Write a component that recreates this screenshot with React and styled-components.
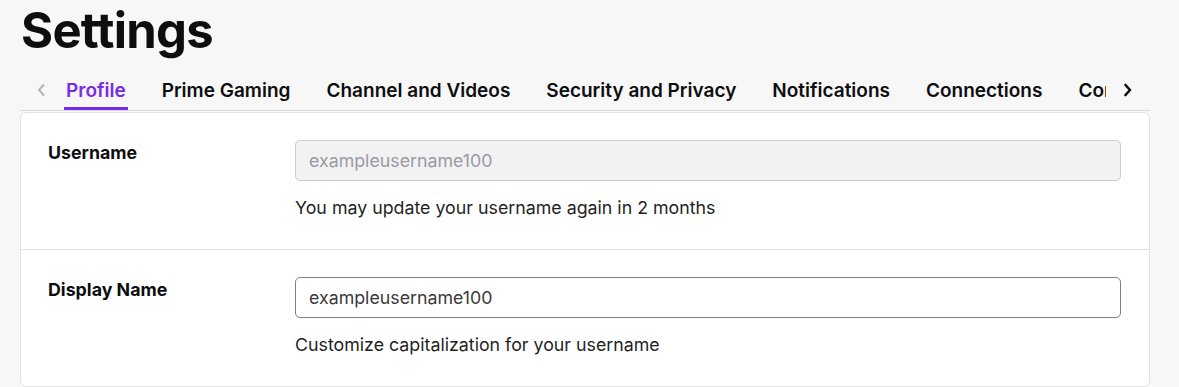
import React from 'react';
import styled, { createGlobalStyle } from 'styled-components';

const GlobalStyle = createGlobalStyle`
  html, body {
    margin: 0;
    background: #f7f7f8;
    font-family: Inter, "Noto Sans", sans-serif;
    color: #0e0e10;
  }
`;

const Page = styled.div`
  padding: 1px 29px 0 20px;
`;

const Title = styled.h1`
  margin: 0 0 9px 1px;
  font-size: 49px;
  line-height: 60px;
  font-weight: 700;
  letter-spacing: -0.7px;
`;

const TabBar = styled.nav`
  display: flex;
  align-items: stretch;
  height: 40px;
  border-bottom: 1px solid #dadade;
  margin-bottom: 1px;
`;

const Arrow = styled.button`
  display: flex;
  align-items: center;
  justify-content: center;
  flex: none;
  width: ${p => p.$w}px;
  padding: 0 0 1px;
  border: 0;
  background: none;
  color: ${p => (p.$muted ? '#b5b5bd' : '#0e0e10')};
`;

const TabList = styled.div`
  display: flex;
  gap: 32px;
  flex: 1;
  overflow: hidden;
  padding-left: 3px;
`;

const Tab = styled.a`
  flex: none;
  box-sizing: border-box;
  height: 40px;
  padding: 9px 2px 0;
  font-size: 19px;
  line-height: 24px;
  font-weight: 600;
  white-space: nowrap;
  color: ${p => (p.$active ? '#772ce8' : '#0e0e10')};
  border-bottom: 3px solid ${p => (p.$active ? '#772ce8' : 'transparent')};
`;

const Card = styled.section`
  background: #fff;
  border: 1px solid #e3e3e6;
  border-radius: 6px;
`;

const Row = styled.div`
  display: grid;
  grid-template-columns: 247px 1fr;
  padding: 27px 28px 29px 27px;
  border-top: ${p => (p.$first ? '0' : '1px solid #e3e3e6')};
`;

const Label = styled.label`
  padding-top: 2px;
  font-size: 17.8px;
  line-height: 22px;
  font-weight: 700;
`;

const Field = styled.div`
  display: flex;
  flex-direction: column;
`;

const Input = styled.input`
  box-sizing: border-box;
  height: 41px;
  padding: 0 13px;
  font-family: inherit;
  font-size: 17.8px;
  border-radius: 5px;
  border: 1px solid ${p => (p.disabled ? '#cbcbd0' : '#7d7d85')};
  background: ${p => (p.disabled ? '#f2f2f3' : '#fff')};
  color: ${p => (p.disabled ? '#9a9aa2' : '#3a3a3d')};
  outline: none;
`;

const Hint = styled.p`
  margin: 15px 0 0;
  font-size: 17.8px;
  line-height: 24px;
  color: #1f1f23;
`;

const Chevron = ({ dir }) => (
  <svg width="10" height="14" viewBox="0 0 10 14" fill="none">
    <path
      d={dir === 'left' ? 'M7.5 2 L3 7 L7.5 12' : 'M2.5 2 L7 7 L2.5 12'}
      stroke="currentColor"
      strokeWidth={dir === 'left' ? 2 : 2.6}
      strokeLinecap="round"
      strokeLinejoin="round"
    />
  </svg>
);

const tabs = [
  'Profile',
  'Prime Gaming',
  'Channel and Videos',
  'Security and Privacy',
  'Notifications',
  'Connections',
  'Content Preferences',
];

const App = () => (
  <Page>
    <GlobalStyle />
    <Title>Settings</Title>
    <TabBar>
      <Arrow $w={41} $muted aria-label="Previous">
        <Chevron dir="left" />
      </Arrow>
      <TabList>
        {tabs.map((t, i) => (
          <Tab key={t} $active={i === 0}>{t}</Tab>
        ))}
      </TabList>
      <Arrow $w={44} aria-label="Next">
        <Chevron dir="right" />
      </Arrow>
    </TabBar>
    <Card>
      <Row $first>
        <Label>Username</Label>
        <Field>
          <Input disabled value="exampleusername100" readOnly />
          <Hint>You may update your username again in 2 months</Hint>
        </Field>
      </Row>
      <Row>
        <Label>Display Name</Label>
        <Field>
          <Input defaultValue="exampleusername100" />
          <Hint>Customize capitalization for your username</Hint>
        </Field>
      </Row>
    </Card>
  </Page>
);

export default App;
